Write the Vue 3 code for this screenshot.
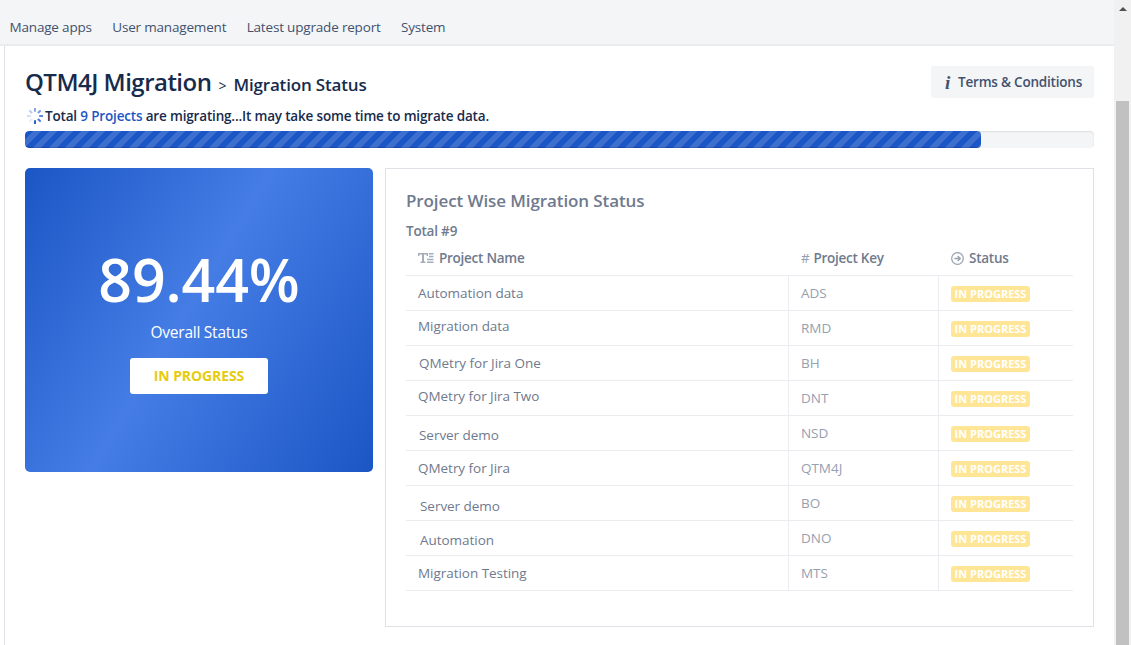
<template>
  <div class="page">
    <div class="main">
      <nav class="nav">
        <a v-for="item in navItems" :key="item" class="nav-item">{{ item }}</a>
      </nav>

      <div class="content">
        <div class="heading">
          <h1 class="title">QTM4J Migration</h1>
          <span class="sep">&gt;</span>
          <h2 class="subtitle">Migration Status</h2>
          <button class="terms">
            <span class="info">i</span>
            <span>Terms &amp; Conditions</span>
          </button>
        </div>

        <div class="notice">
          <svg class="spinner" width="16" height="16" viewBox="0 0 16 16">
            <line
              v-for="n in 8"
              :key="n"
              x1="8"
              y1="0"
              x2="8"
              y2="3.8"
              stroke="#1d56c5"
              stroke-width="2"
              :opacity="spokes[n - 1]"
              :transform="`rotate(${(n - 1) * 45} 8 8)`"
            />
          </svg>
          <span>Total <a class="link">9 Projects</a> are migrating...It may take some time to migrate data.</span>
        </div>

        <div class="progress">
          <div class="progress-bar" :style="{ width: percent + '%' }"></div>
        </div>

        <div class="panels">
          <section class="overall">
            <div class="percent">{{ percent }}%</div>
            <div class="overall-label">Overall Status</div>
            <div class="overall-status">IN PROGRESS</div>
          </section>

          <section class="projects">
            <h3 class="projects-title">Project Wise Migration Status</h3>
            <div class="total">Total #{{ projects.length }}</div>
            <div class="row head">
              <div class="cell">
                <svg class="icon" width="16" height="12" viewBox="0 0 16 12">
                  <path d="M0 1h10v3H8.6V2.6H6V9.4h1.4V11H2.6V9.4H4V2.6H1.4V4H0zM11 1h4.5v1.4H11zM11 3.8h4.5v1.4H11zM9 6.8h6.5v1.4H9zM9 9.6h6.5V11H9z" fill="#a5adba" />
                </svg>
                <span>Project Name</span>
              </div>
              <div class="cell"><span class="hash">#</span><span>Project Key</span></div>
              <div class="cell">
                <svg class="icon" width="13" height="13" viewBox="0 0 13 13" fill="none" stroke="#97a0af">
                  <circle cx="6.5" cy="6.5" r="5.8" stroke-width="1.2" />
                  <path d="M3.4 6.5h5.4M6.6 4l2.6 2.5L6.6 9" stroke-width="1.4" />
                </svg>
                <span>Status</span>
              </div>
            </div>
            <div v-for="project in projects" :key="project.key" class="row">
              <div class="cell">
                <span class="name" :style="{ marginLeft: project.dx + 'px', marginTop: project.dy * 2 + 'px' }">{{ project.name }}</span>
              </div>
              <div class="cell key">{{ project.key }}</div>
              <div class="cell"><span class="badge">IN PROGRESS</span></div>
            </div>
          </section>
        </div>
      </div>
    </div>

    <div class="scrollbar">
      <div class="arrow"></div>
      <div class="thumb"></div>
    </div>
  </div>
</template>

<script setup>
import { ref } from "vue";

const percent = ref(89.44);

const navItems = ["Manage apps", "User management", "Latest upgrade report", "System"];

// opacity of each spinner spoke, clockwise from the top
const spokes = [0.5, 0.6, 0.7, 0.8, 0.95, 0.1, 0.18, 0.3];

const projects = ref([
  { name: "Automation data", key: "ADS", dx: 0, dy: 0 },
  { name: "Migration data", key: "RMD", dx: 0, dy: -2 },
  { name: "QMetry for Jira One", key: "BH", dx: 1, dy: 0 },
  { name: "QMetry for Jira Two", key: "DNT", dx: 0, dy: -2 },
  { name: "Server demo", key: "NSD", dx: 1, dy: 2 },
  { name: "QMetry for Jira", key: "QTM4J", dx: 0, dy: 0 },
  { name: "Server demo", key: "BO", dx: 2, dy: 3 },
  { name: "Automation", key: "DNO", dx: 2, dy: 2 },
  { name: "Migration Testing", key: "MTS", dx: 0, dy: 0 },
]);
</script>

<style>
body {
  margin: 0;
  overflow: hidden;
}
</style>

<style scoped>
.page {
  display: flex;
  height: 645px;
  overflow: hidden;
  background: #fff;
  font-family: "Open Sans", "Noto Sans", sans-serif;
  font-size: 14px;
  color: #172b4d;
}

.main {
  flex: 1;
  display: flex;
  flex-direction: column;
}

.nav {
  box-sizing: border-box;
  height: 46px;
  padding: 9px 0 0 9.5px;
  display: flex;
  align-items: center;
  gap: 20.4px;
  background: #f4f5f7;
  border-bottom: 2px solid #ebecf0;
  font-size: 13.5px;
  letter-spacing: -0.18px;
  color: #42526e;
}

.nav-item {
  white-space: nowrap;
}

.content {
  flex: 1;
  margin-left: 4px;
  padding: 20px 20px 0;
  border-left: 1px solid #dfe1e6;
}

.heading {
  display: flex;
  align-items: center;
  height: 32px;
}

.title {
  margin: 0;
  font-size: 24px;
  font-weight: 600;
  letter-spacing: -0.52px;
  line-height: 32px;
}

.sep {
  margin: 6px 7px 0 7px;
}

.subtitle {
  margin: 5px 0 0;
  font-size: 17px;
  font-weight: 600;
  letter-spacing: -0.17px;
}

.terms {
  box-sizing: border-box;
  display: flex;
  align-items: center;
  gap: 8px;
  width: 163px;
  height: 32px;
  margin-left: auto;
  padding: 0 0 0 14px;
  border: 0;
  border-radius: 3px;
  background: #f4f5f7;
  font: 600 13.5px "Open Sans", sans-serif;
  letter-spacing: -0.21px;
  color: #42526e;
  white-space: nowrap;
}

.info {
  font: italic bold 19px/19px "Liberation Serif", serif;
}

.notice {
  display: flex;
  align-items: center;
  height: 20px;
  margin-top: 8px;
  padding-left: 2px;
  font-size: 13.5px;
  font-weight: 600;
  letter-spacing: -0.17px;
}

.spinner {
  margin-right: 2px;
}

.link {
  color: #1d56c5;
}

.progress {
  height: 17px;
  margin-top: 5px;
  border-radius: 4px;
  background: #f4f5f7;
  box-shadow: inset 0 1px 2px rgba(0, 0, 0, 0.1);
  overflow: hidden;
}

.progress-bar {
  height: 100%;
  border-radius: 4px;
  background-color: #1b56c6;
  background-image: linear-gradient(-45deg, rgba(255, 255, 255, 0.15) 25%, transparent 25%, transparent 50%, rgba(255, 255, 255, 0.15) 50%, rgba(255, 255, 255, 0.15) 75%, transparent 75%, transparent);
  background-size: 16px 16px;
  box-shadow: inset 0 -1px 0 rgba(0, 0, 0, 0.15);
}

.panels {
  display: flex;
  align-items: flex-start;
  gap: 12px;
  margin-top: 20px;
}

.overall {
  width: 348px;
  height: 304px;
  border-radius: 5px;
  background: linear-gradient(121deg, #1b56c5, #457de5 46.5%, #1b56c5);
  display: flex;
  flex-direction: column;
  align-items: center;
  color: #fff;
}

.percent {
  margin-top: 71px;
  font-size: 59px;
  font-weight: 600;
  letter-spacing: -0.1px;
  line-height: 80px;
}

.overall-label {
  margin-top: 3px;
  font-size: 15.5px;
  letter-spacing: -0.25px;
  line-height: 20px;
}

.overall-status {
  width: 138px;
  height: 36px;
  margin-top: 16px;
  border-radius: 3px;
  background: #fff;
  color: #e6cc0d;
  font-size: 14px;
  font-weight: 700;
  letter-spacing: -0.1px;
  line-height: 36px;
  text-align: center;
}

.projects {
  box-sizing: border-box;
  flex: 1;
  height: 459px;
  padding: 20px 20px 0;
  border: 1px solid #dfe1e6;
  color: #6f7a8e;
}

.projects-title {
  margin: 0;
  font-size: 17px;
  font-weight: 600;
  letter-spacing: -0.1px;
  line-height: 24px;
}

.total {
  margin-top: 8px;
  font-size: 13.5px;
  font-weight: 600;
  letter-spacing: -0.2px;
  line-height: 20px;
}

.row {
  display: grid;
  grid-template-columns: 383px 150px 134px;
  height: 34px;
  border-bottom: 1px solid #ebecf0;
}

.cell {
  display: flex;
  align-items: center;
  padding-left: 12px;
  border-right: 1px solid #ebecf0;
  font-size: 13.5px;
  letter-spacing: -0.04px;
  white-space: nowrap;
}

.cell:last-child {
  border-right: 0;
}

.head .cell {
  border-right-color: transparent;
  font-weight: 600;
  letter-spacing: -0.26px;
}

.icon {
  margin-right: 5px;
}

.hash {
  margin-right: 4px;
  color: #97a0af;
  font-weight: 400;
}

.key {
  color: #97a0af;
}

.badge {
  width: 79px;
  height: 16px;
  margin-top: 2px;
  border-radius: 3px;
  background: #ffe696;
  color: #fff;
  font-size: 11px;
  font-weight: 700;
  letter-spacing: 0;
  line-height: 16px;
  text-align: center;
}

.scrollbar {
  width: 17px;
  background: #f1f1f1;
}

.arrow {
  width: 0;
  margin: 7px 0 0 5px;
  border: 4px solid transparent;
  border-top: 0;
  border-bottom-color: #505050;
}

.thumb {
  width: 13px;
  height: 544px;
  margin: 90px 0 0 2px;
  background: #c1c1c1;
}
</style>
